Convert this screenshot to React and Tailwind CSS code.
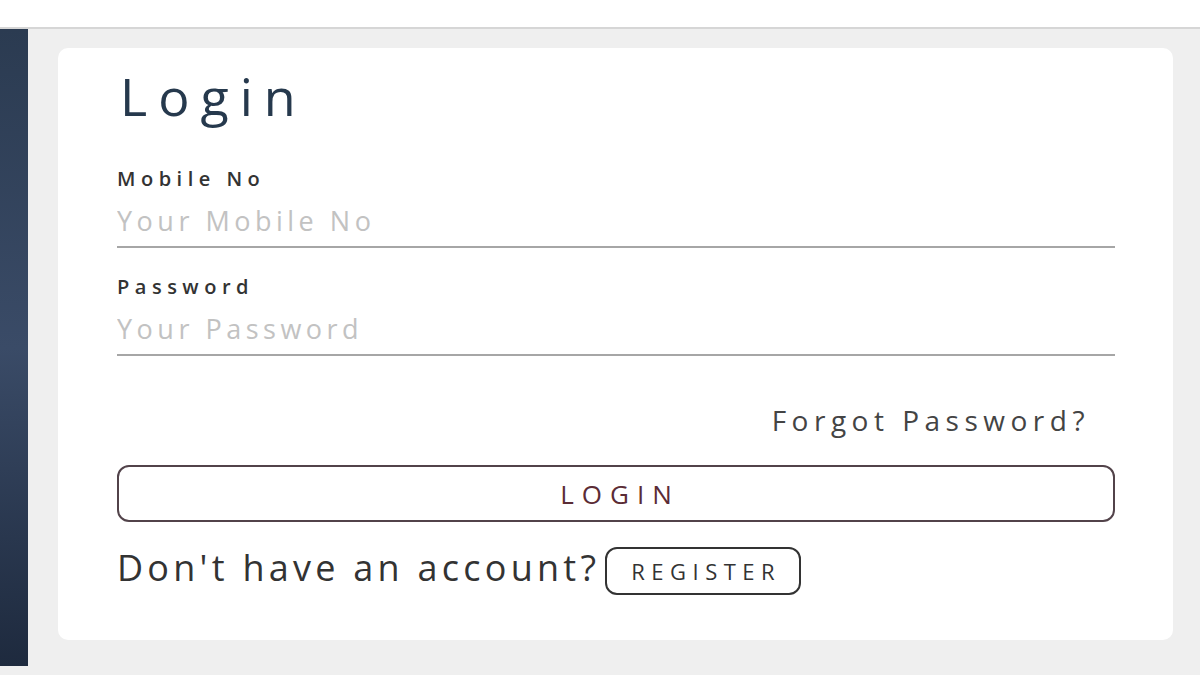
export default function App() {
  return (
    <div className="w-[1200px] h-[675px] overflow-hidden bg-[#efefef] font-['Open_Sans',sans-serif]">
      <div className="h-[29px] bg-white border-b-2 border-[#d6d6d6]" />

      <div className="flex">
        <div className="w-[28px] h-[637px] bg-gradient-to-b from-[#2b3b51] via-[#3a4b67] to-[#1e2a3e]" />

        <div className="flex-1 pt-[19px] pl-[30px] pr-[27px]">
          <form
            onSubmit={(e) => e.preventDefault()}
            className="h-[592px] bg-white rounded-[10px] pl-[59px] pr-[58px] pt-[22px]"
          >
            <h1 className="text-[52px] leading-none tracking-[11px] text-[#26394d] ml-[3px]">
              Login
            </h1>

            <label className="block mt-[47px] text-[20px] leading-none font-semibold tracking-[5.5px] text-[#333]">
              Mobile No
            </label>
            <input
              type="text"
              placeholder="Your Mobile No"
              className="block w-full mt-[11px] h-[48px] pb-[6px] text-[27px] tracking-[4.5px] text-[#333] placeholder:text-[#c2c2c2] border-b-2 border-[#a6a6a6] outline-none"
            />

            <label className="block mt-[29px] text-[20px] leading-none font-semibold tracking-[5.5px] text-[#333]">
              Password
            </label>
            <input
              type="password"
              placeholder="Your Password"
              className="block w-full mt-[11px] h-[48px] pb-[6px] text-[27px] tracking-[4.5px] text-[#333] placeholder:text-[#c2c2c2] border-b-2 border-[#a6a6a6] outline-none"
            />

            <div className="flex justify-end mt-[50px] pr-[25px]">
              <a href="#" className="text-[28px] leading-none tracking-[5.5px] text-[#444]">
                Forgot Password?
              </a>
            </div>

            <button
              type="submit"
              className="block w-full h-[57px] mt-[31px] border-2 border-[#52434a] rounded-[12px] pl-[8px] text-[26px] leading-none font-medium tracking-[8px] text-[#5b2c36]"
            >
              LOGIN
            </button>

            <div className="flex items-start mt-[25px]">
              <span className="mt-[3px] text-[36px] leading-none tracking-[4.25px] text-[#333]">
                Don't have an account?
              </span>
              <button
                type="button"
                className="ml-[5px] w-[196px] h-[48px] border-2 border-[#333] rounded-[12px] pl-[6px] text-[22px] leading-none font-medium tracking-[6.5px] text-[#333]"
              >
                REGISTER
              </button>
            </div>
          </form>
        </div>
      </div>
    </div>
  );
}
